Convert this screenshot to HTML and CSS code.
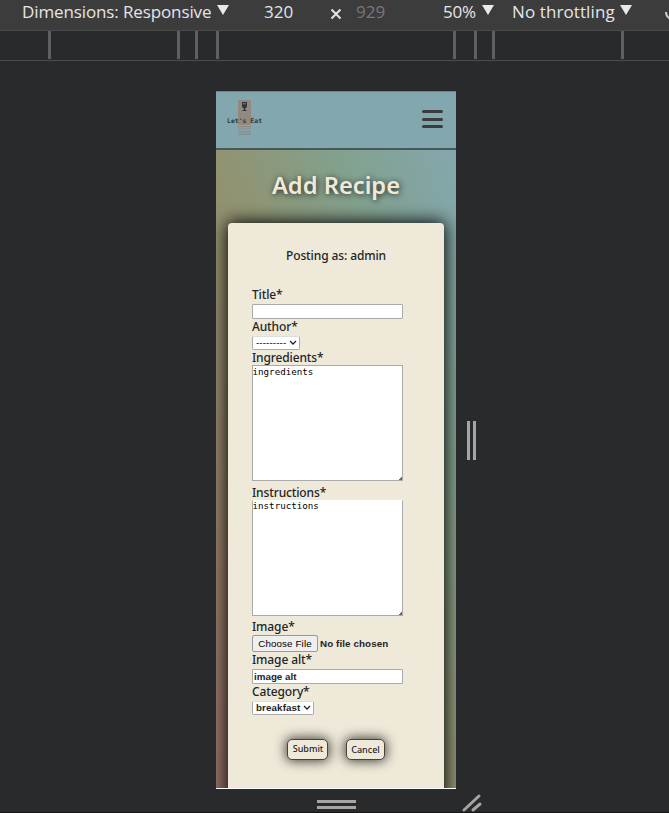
FILE: index.html
```html
<!DOCTYPE html>
<html lang="en">
<head>
<meta charset="utf-8">
<title>Add Recipe</title>
<link rel="stylesheet" href="styles.css">
</head>
<body>
<div class="toolbar">
  <span class="tool dims">Dimensions: Responsive</span><i class="arrow"></i>
  <span class="tool width">320</span>
  <svg class="times" width="12" height="12" viewBox="0 0 12 12"><path d="M1.5 1.5l9 9M10.5 1.5l-9 9"/></svg>
  <span class="tool height">929</span>
  <span class="tool zoom">50%</span><i class="arrow"></i>
  <span class="tool throttle">No throttling</span><i class="arrow"></i>
  <svg class="rotate" width="6" height="14" viewBox="0 0 6 14"><path d="M1 2q0 5 5 7"/></svg>
</div>
<div class="ruler"><i></i><i></i><i></i><i></i><i></i><i></i><i></i><i></i></div>
<main class="stage">
  <div class="phone">
    <header class="nav">
      <svg class="logo" width="38" height="38" viewBox="0 0 38 38">
        <path class="board" d="M12 0h13v25h-13zM12 26h13v1.2h-13zM12 28.4h13v1.2h-13zM12 31h13v1.2h-13zM12 33.6h13v1.2h-13z"/>
        <path class="glass" d="M16 2h5v4q0 2-1.8 2.4v1.6h1.3v1h-4v-1h1.3v-1.6Q16 8 16 6z"/>
        <path class="shine" d="M17.2 3h2.6v1.4h-2.6z"/>
        <text x="1" y="22.5" textLength="35">Let's Eat</text>
      </svg>
      <div class="menu"><i></i><i></i><i></i></div>
    </header>
    <section class="page">
      <h1>Add Recipe</h1>
      <form class="card">
        <p>Posting as: admin</p>
        <label class="l-title">Title*</label>
        <div class="field"></div>
        <label class="l-author">Author*</label>
        <div class="select author"><span>---------</span><svg width="8" height="6" viewBox="0 0 8 6"><path d="M1 1l3 3 3-3"/></svg></div>
        <label class="l-ingredients">Ingredients*</label>
        <div class="area"><span>ingredients</span></div>
        <label class="l-instructions">Instructions*</label>
        <div class="area second"><span>instructions</span></div>
        <label class="l-image">Image*</label>
        <div class="file"><span class="choose">Choose File</span><b>No file chosen</b></div>
        <label class="l-alt">Image alt*</label>
        <div class="field">image alt</div>
        <label class="l-category">Category*</label>
        <div class="select category"><b>breakfast</b><svg width="8" height="6" viewBox="0 0 8 6"><path d="M1 1l3 3 3-3"/></svg></div>
        <div class="actions"><span class="submit">Submit</span><span class="cancel">Cancel</span></div>
      </form>
    </section>
  </div>
  <div class="grip-side"></div>
  <div class="grip-bottom"></div>
  <svg class="grip-corner" width="22" height="20" viewBox="0 0 22 20"><path d="M3 17L18 3M12 17L19 11"/></svg>
</main>
</body>
</html>
```
FILE: styles.css
```css
* { box-sizing: border-box; }
body {
  margin: 0;
  width: 669px;
  height: 813px;
  overflow: hidden;
  background: #292a2b;
  font-family: "Noto Sans", sans-serif;
}
.toolbar {
  display: flex;
  height: 30px;
  background: #3c3c3c;
  overflow: hidden;
  color: #e4e5e8;
  font: 17px/24px "Open Sans", sans-serif;
  white-space: nowrap;
}
.tool { flex: none; }
.dims { width: 190px; margin-left: 22px; letter-spacing: -0.12px; }
.width { width: 29px; margin-left: 35px; }
.height { width: 29px; margin-left: 14px; color: #777; }
.zoom { width: 34px; margin-left: 58px; letter-spacing: -.2px; }
.throttle { width: 103px; margin-left: 18px; letter-spacing: .1px; }
.arrow {
  flex: none;
  width: 12px;
  height: 10px;
  margin: 5px 0 0 5px;
  background: #e8e9ed;
  clip-path: polygon(0 0, 100% 0, 50% 100%);
}
.times { flex: none; margin: 8px 0 0 37px; }
.times path { stroke: #e4e5e8; stroke-width: 2; }
.rotate { flex: none; margin: 10px 0 0 33px; }
.rotate path { fill: none; stroke: #ccc; stroke-width: 2; }
.ruler {
  display: flex;
  height: 31px;
  padding-left: 48px;
  border-top: 1px solid #4b4b4b;
  border-bottom: 1px solid #4b4b4b;
  background: #292a2c;
}
.ruler i { flex: none; width: 3px; height: 28px; background: #606060; }
.ruler i:nth-child(2) { margin-left: 126px; }
.ruler i:nth-child(3) { margin-left: 15px; }
.ruler i:nth-child(4) { margin-left: 18px; }
.ruler i:nth-child(5) { margin-left: 234px; }
.ruler i:nth-child(6) { margin-left: 18px; }
.ruler i:nth-child(7) { margin-left: 15px; }
.ruler i:nth-child(8) { margin-left: 126px; }
.stage {
  position: relative;
  height: 752px;
  padding: 30px 0 0 216px;
  border-bottom: 1px solid #151515;
}
.phone {
  width: 240px;
  height: 698px;
  overflow: hidden;
  border-bottom: 1px solid #fff;
}
.nav {
  display: flex;
  justify-content: space-between;
  height: 59px;
  padding: 8px 13px 0 10px;
  border-top: 1px solid #69858a;
  border-bottom: 2px solid #46585b;
  background: #83a7ae;
}
.board { fill: #918a80; }
.glass { fill: #303536; }
.shine { fill: #74726d; }
.logo text { font: bold 6.4px "DejaVu Sans Mono", monospace; fill: #303536; }
.menu { display: flex; flex-direction: column; gap: 4.5px; padding-top: 10px; }
.menu i { width: 21px; height: 3px; border-radius: 2px; background: #393b3c; }
.page {
  height: 638px;
  padding: 21px 12px 0;
  background: linear-gradient(to top right, #967069, #96836a 25%, #919371 50%, #82a18d 75%, #83a7ae);
}
h1 {
  margin: 0;
  height: 52px;
  color: #efe9d9;
  font-size: 23.7px;
  font-weight: 600;
  line-height: 29px;
  text-align: center;
  white-space: nowrap;
  text-shadow: 1px 1px 6px #222;
}
.card {
  display: flex;
  flex-direction: column;
  align-items: flex-start;
  height: 580px;
  padding: 24px 24px 0;
  border-radius: 4px;
  background: #efe9d9;
  box-shadow: 0 0 17px 1px #000;
  color: #212529;
}
.card p { align-self: center; margin: 0 0 23px; font-size: 12px; line-height: 17px; font-weight: 500; letter-spacing: -.11px; }
label { height: 16px; font-size: 12px; line-height: 16px; font-weight: 500; letter-spacing: -.13px; white-space: nowrap; }
.field {
  width: 151px;
  height: 15px;
  margin: 1px 0 0;
  padding-left: 1px;
  border: 1px solid #aaa;
  border-radius: 1px;
  background: #fff;
  font: bold 9.8px/13px "Liberation Sans", sans-serif;
}
.select {
  display: flex;
  align-items: center;
  justify-content: space-between;
  height: 14px;
  margin-top: 1px;
  padding: 0 2px 0 3px;
  border: 1px solid #aaa;
  border-top-color: #ddd;
  border-radius: 2px;
  background: #fff;
  font: 9.8px/12px "Liberation Sans", sans-serif;
}
.select b { letter-spacing: .1px; }
.select svg { flex: none; }
.select svg path { fill: none; stroke: #222; stroke-width: 1.3; }
.author { width: 48px; color: #000; }
.author span { letter-spacing: .1px; }
.category { width: 62px; }
.area {
  position: relative;
  width: 151px;
  height: 116px;
  border: 1px solid #aaa;
  background: #fff;
  font: 9.2px/12px "DejaVu Sans Mono", monospace;
  color: #000;
}
.area::after {
  content: "";
  position: absolute;
  right: 0;
  bottom: 0;
  width: 3px;
  height: 3px;
  background: linear-gradient(135deg, transparent 50%, #666 50%);
}
.area span { display: block; margin-left: -.5px; }
.second span { margin-top: -1px; }
.l-ingredients { height: 15px; line-height: 15px; }
.l-instructions { margin-top: 3px; line-height: 18px; }
.second { border-top-color: #fff; }
.l-image { margin-top: 3px; }
.file { display: flex; align-items: center; gap: 2px; height: 17px; font: 9.8px/15px "Liberation Sans", sans-serif; }
.file b { letter-spacing: .1px; }
.choose {
  width: 66px;
  height: 17px;
  border: 1px solid #999;
  border-radius: 2px;
  background: #efefef;
  color: #000;
  letter-spacing: .12px;
  text-align: center;
}
.actions { display: flex; gap: 18px; margin: 24px 0 0 35px; }
.submit, .cancel {
  height: 21px;
  border: 1px solid #444;
  border-radius: 5px;
  background: #efe9d9;
  box-shadow: 0 0 12px 1px #3c3a34;
  font-size: 9px;
  font-weight: 500;
  line-height: 18px;
  text-align: center;
}
.submit { width: 41px; padding-left: 1px; }
.cancel { width: 39px; line-height: 20px; }
.grip-side {
  position: absolute;
  left: 467px;
  top: 360px;
  width: 9px;
  height: 39px;
  border: solid #a5a5a5;
  border-width: 0 3px;
}
.grip-bottom {
  position: absolute;
  left: 317px;
  top: 739px;
  width: 39px;
  height: 9px;
  border: solid #a5a5a5;
  border-width: 3px 0;
}
.grip-corner { position: absolute; left: 461px; top: 732px; }
.grip-corner path { stroke: #a5a5a5; stroke-width: 3; stroke-linecap: round; }
```
